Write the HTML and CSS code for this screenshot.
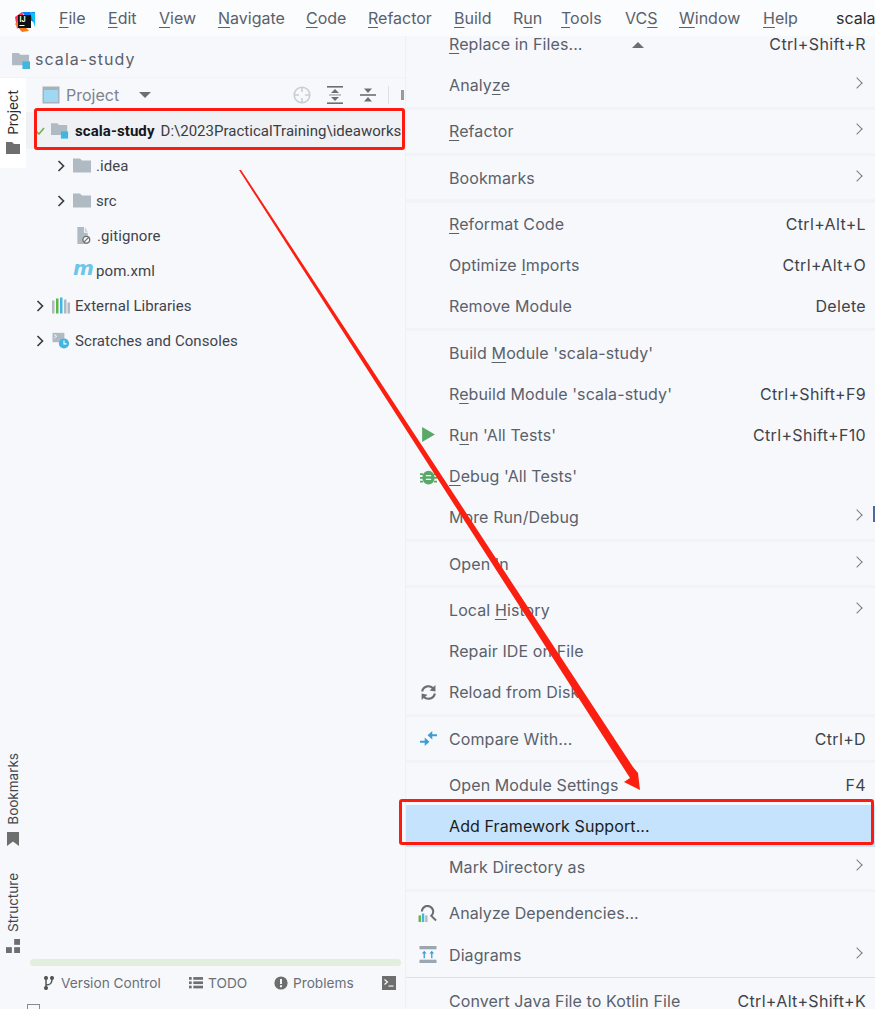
FILE: index.html
```html
<!DOCTYPE html>
<html lang="en">
  <head>
    <meta charset="UTF-8" />
    <title>scala-study</title>
    <link rel="stylesheet" href="styles.css">
  </head>
  <body>
    <div class="app">
      <header class="titlebar">
        <svg class="logo" viewBox="0 0 20 20">
          <polygon points="0,5 7,0 10,6 2,17" fill="#fe315d" />
          <polygon points="7,0 20,0 20,11 12,6" fill="#087cfa" />
          <polygon points="0,12 7,20 14,19 4,8" fill="#f97a12" />
          <polygon points="15,0 20,1 20,15" fill="#07c3f2" />
          <rect x="3" y="3" width="13" height="13" fill="#111" />
          <text x="4.500" y="10" class="logo-text">IJ</text>
          <rect x="4.500" y="13" width="5" height="1" fill="#fff" />
        </svg>
        <nav class="mainmenu">
          <span class="m-file"><u>F</u>ile</span>
          <span class="m-edit"><u>E</u>dit</span>
          <span class="m-view"><u>V</u>iew</span>
          <span class="m-navigate"><u>N</u>avigate</span>
          <span class="m-code"><u>C</u>ode</span>
          <span class="m-refactor"><u>R</u>efactor</span>
          <span class="m-build"><u>B</u>uild</span>
          <span class="m-run">R<u>u</u>n</span>
          <span class="m-tools"><u>T</u>ools</span>
          <span class="m-vcs">VC<u>S</u></span>
          <span class="m-window"><u>W</u>indow</span>
          <span class="m-help"><u>H</u>elp</span>
        </nav>
        <span class="window-title">scala-study</span>
      </header>

      <div class="main">
        <div class="side">
          <div class="navbar">
            <svg class="icon-folder-mod" viewBox="0 0 20 18">
              <path d="M0 1h7l2 2h9v11H0z" fill="#b0bac2" />
              <rect x="11" y="10" width="8" height="8" fill="#40b6e0" />
            </svg>
            <span class="nav-name">scala-study</span>
          </div>

          <div class="workspace">
            <div class="strip">
              <div class="strip-tab active">
                <span class="vtext">Project</span>
                <svg class="strip-icon" viewBox="0 0 14 12"><path d="M0 0h6l2 2h6v10H0z" fill="#6e6e6e" /></svg>
              </div>
              <div class="strip-bottom">
                <div class="strip-tab">
                  <span class="vtext">Bookmarks</span>
                  <svg class="strip-icon tall" viewBox="0 0 12 14"><path d="M0 0h12v14L6 9.500 0 14z" fill="#6e6e6e" /></svg>
                </div>
                <div class="strip-tab">
                  <span class="vtext">Structure</span>
                  <svg class="strip-icon tall" viewBox="0 0 12 12">
                    <rect x="7" y="0" width="5" height="5" fill="#6e6e6e" />
                    <rect x="0" y="7" width="5" height="5" fill="#6e6e6e" />
                    <rect x="7" y="7" width="5" height="5" fill="#6e6e6e" />
                  </svg>
                </div>
              </div>
            </div>

            <div class="panel">
              <div class="panel-head">
                <svg class="icon-view" viewBox="0 0 18 18">
                  <rect x="0.500" y="0.500" width="17" height="17" fill="#a9b2ba" />
                  <rect x="2" y="4" width="14" height="12" fill="#9fd8f2" />
                </svg>
                <span class="panel-title">Project</span>
                <span class="caret"></span>
                <div class="panel-tools">
                  <svg class="tool" viewBox="0 0 18 18" fill="none" stroke="#c9cdd2" stroke-width="1.600">
                    <circle cx="9" cy="9" r="7.800" />
                    <path d="M9 1v5M9 12v5M1 9h5M12 9h5" />
                  </svg>
                  <svg class="tool" viewBox="0 0 16 18" fill="#6e6e6e">
                    <rect x="0" y="0" width="16" height="1.600" />
                    <rect x="0" y="16.400" width="16" height="1.600" />
                    <polygon points="8,3 12,7 4,7" />
                    <polygon points="8,15 12,11 4,11" />
                    <rect x="2" y="8.300" width="12" height="1.300" fill="#a8a8a8" />
                  </svg>
                  <svg class="tool" viewBox="0 0 16 18" fill="#6e6e6e">
                    <rect x="0" y="8.200" width="16" height="1.600" />
                    <polygon points="8,7 12,2.500 4,2.500" />
                    <polygon points="8,11 12,15.500 4,15.500" />
                  </svg>
                  <span class="tool-sep"></span>
                  <span class="tool-cut"></span>
                </div>
              </div>

              <ul class="tree">
                <li class="tree-row selected">
                  <svg class="check" viewBox="0 0 10 8" fill="none" stroke="#62b543" stroke-width="1.500"><path d="M1 4l3 3 5-6" /></svg>
                  <svg class="tree-icon" viewBox="0 0 20 18">
                    <path d="M0 1h7l2 2h9v11H0z" fill="#b0bac2" />
                    <rect x="11" y="10" width="8" height="8" fill="#40b6e0" />
                  </svg>
                  <b class="tree-bold">scala-study</b>
                  <span class="tree-path">D:\2023PracticalTraining\ideaworks</span>
                </li>
                <li class="tree-row lvl1">
                  <svg class="chev" viewBox="0 0 8 12" fill="none" stroke="#3c3f41" stroke-width="1.700"><path d="M1.500 1l5 5-5 5" /></svg>
                  <svg class="tree-icon" viewBox="0 0 18 14"><path d="M0 0h7l2 2h9v12H0z" fill="#b0bac2" /></svg>
                  <span>.idea</span>
                </li>
                <li class="tree-row lvl1">
                  <svg class="chev" viewBox="0 0 8 12" fill="none" stroke="#3c3f41" stroke-width="1.700"><path d="M1.500 1l5 5-5 5" /></svg>
                  <svg class="tree-icon" viewBox="0 0 18 14"><path d="M0 0h7l2 2h9v12H0z" fill="#b0bac2" /></svg>
                  <span>src</span>
                </li>
                <li class="tree-row lvl1 leaf">
                  <svg class="tree-icon" viewBox="0 0 18 18">
                    <path d="M3 0h7v6h4v12H3z" fill="#b0bac2" />
                    <path d="M11 0l3 5h-3z" fill="#c9d0d6" />
                    <circle cx="12.500" cy="13.500" r="3.600" fill="#f7f8fb" stroke="#6e6e6e" stroke-width="1.400" />
                    <path d="M10 16l5-5" stroke="#6e6e6e" stroke-width="1.300" />
                  </svg>
                  <span>.gitignore</span>
                </li>
                <li class="tree-row lvl1 leaf">
                  <span class="maven-m">m</span>
                  <span>pom.xml</span>
                </li>
                <li class="tree-row">
                  <svg class="chev" viewBox="0 0 8 12" fill="none" stroke="#3c3f41" stroke-width="1.700"><path d="M1.500 1l5 5-5 5" /></svg>
                  <svg class="tree-icon" viewBox="0 0 18 16">
                    <rect x="0" y="3" width="2.500" height="13" fill="#b0bac2" />
                    <rect x="4" y="1" width="2.500" height="15" fill="#62b543" />
                    <rect x="8" y="0" width="2.500" height="16" fill="#40b6e0" />
                    <rect x="12" y="2" width="2.500" height="14" fill="#b0bac2" />
                    <rect x="15.500" y="5" width="2.500" height="11" fill="#b0bac2" />
                  </svg>
                  <span>External Libraries</span>
                </li>
                <li class="tree-row">
                  <svg class="chev" viewBox="0 0 8 12" fill="none" stroke="#3c3f41" stroke-width="1.700"><path d="M1.500 1l5 5-5 5" /></svg>
                  <svg class="tree-icon" viewBox="0 0 20 20">
                    <rect x="0" y="1" width="14" height="11" fill="#b0bac2" />
                    <path d="M2 3l3 2-3 2" fill="none" stroke="#fff" stroke-width="1" />
                    <circle cx="13.500" cy="13.500" r="6" fill="#40b6e0" />
                    <path d="M13.500 10v4h3" fill="none" stroke="#fff" stroke-width="1.300" />
                  </svg>
                  <span>Scratches and Consoles</span>
                </li>
              </ul>

              <div class="progress"></div>
            </div>
          </div>

          <div class="toolbar">
            <span class="tw tw-vc">
              <svg class="tw-icon" viewBox="0 0 12 14" fill="none" stroke="#555" stroke-width="1.500">
                <path d="M3 2v10M3 9c5 0 6-2 6-6" />
                <circle cx="3" cy="2" r="1.300" fill="#555" />
                <circle cx="3" cy="12" r="1.300" fill="#555" />
                <circle cx="9" cy="2" r="1.300" fill="#555" />
              </svg>
              Version Control
            </span>
            <span class="tw tw-todo">
              <svg class="tw-icon" viewBox="0 0 13 11" fill="#6e6e6e">
                <rect y="0" width="2.500" height="2.500" /><rect x="4" y="0" width="9" height="2.500" />
                <rect y="4" width="2.500" height="2.500" /><rect x="4" y="4" width="9" height="2.500" />
                <rect y="8" width="2.500" height="2.500" /><rect x="4" y="8" width="9" height="2.500" />
              </svg>
              TODO
            </span>
            <span class="tw tw-problems">
              <svg class="tw-icon" viewBox="0 0 14 14">
                <circle cx="7" cy="7" r="6.600" fill="#6e6e6e" />
                <rect x="6" y="3" width="2" height="5" fill="#f7f8fb" />
                <rect x="6" y="9.200" width="2" height="2" fill="#f7f8fb" />
              </svg>
              Problems
            </span>
            <svg class="tw-term" viewBox="0 0 14 14">
              <rect width="14" height="14" fill="#6e6e6e" />
              <path d="M2.500 3.500l3 2.500-3 2.500" fill="none" stroke="#fff" stroke-width="1.100" />
              <rect x="6.500" y="9.500" width="5" height="1.100" fill="#fff" />
            </svg>
          </div>
          <div class="corner"><span class="corner-icon"></span></div>
        </div>

        <div class="popup">
          <ul class="popup-list">
            <li class="item"><span><u>R</u>eplace in Files...</span><kbd>Ctrl+Shift+R</kbd></li>
            <li class="item"><span>Analy<u>z</u>e</span><i class="sub"></i></li>
            <li class="sep"></li>
            <li class="item"><span><u>R</u>efactor</span><i class="sub"></i></li>
            <li class="sep"></li>
            <li class="item"><span>Bookmarks</span><i class="sub"></i></li>
            <li class="sep"></li>
            <li class="item"><span><u>R</u>eformat Code</span><kbd>Ctrl+Alt+L</kbd></li>
            <li class="item"><span>Optimize <u>I</u>mports</span><kbd>Ctrl+Alt+O</kbd></li>
            <li class="item"><span>Remove Module</span><kbd>Delete</kbd></li>
            <li class="sep"></li>
            <li class="item"><span>Build <u>M</u>odule 'scala-study'</span></li>
            <li class="item"><span>R<u>e</u>build Module 'scala-study'</span><kbd>Ctrl+Shift+F9</kbd></li>
            <li class="item">
              <svg class="item-icon" viewBox="0 0 16 16"><polygon points="2,1 14,8 2,15" fill="#59a869" /></svg>
              <span>R<u>u</u>n 'All Tests'</span><kbd>Ctrl+Shift+F10</kbd>
            </li>
            <li class="item">
              <svg class="item-icon" viewBox="0 0 16 16" fill="#59a869">
                <ellipse cx="8" cy="9" rx="5.800" ry="6.500" />
                <path d="M0 5h3v1.600H0zM0 8.500h3v1.600H0zM0 12h3v1.600H0zM13 5h3v1.600h-3zM13 8.500h3v1.600h-3zM13 12h3v1.600h-3z" />
                <path d="M5.500 6.500h5v1.200h-5zM5.500 10h5v1.200h-5z" fill="#f7f8fb" />
              </svg>
              <span><u>D</u>ebug 'All Tests'</span>
            </li>
            <li class="item"><span>More Run/Debug</span><i class="sub"></i></li>
            <li class="sep"></li>
            <li class="item"><span>Open In</span><i class="sub"></i></li>
            <li class="sep"></li>
            <li class="item"><span>Local <u>H</u>istory</span><i class="sub"></i></li>
            <li class="item"><span>Repair IDE on File</span></li>
            <li class="item">
              <svg class="item-icon" viewBox="0 0 16 16" fill="none" stroke="#6e6e6e" stroke-width="2">
                <path d="M2 7a6 6 0 0 1 11-2M14 9a6 6 0 0 1-11 2" />
                <polygon points="14.500,1 14.500,7 9,6" fill="#6e6e6e" stroke="none" />
                <polygon points="1.500,15 1.500,9 7,10" fill="#6e6e6e" stroke="none" />
              </svg>
              <span>Reload from Disk</span>
            </li>
            <li class="sep"></li>
            <li class="item">
              <svg class="item-icon" viewBox="0 0 18 18" fill="#389fd6">
                <polygon points="8,5.500 13,1 13,4.500 18,4.500 18,6.500 13,6.500 13,10" />
                <polygon points="10,12.500 5,8 5,11.500 0,11.500 0,13.500 5,13.500 5,17" />
              </svg>
              <span>Compare With...</span><kbd>Ctrl+D</kbd>
            </li>
            <li class="sep"></li>
            <li class="item"><span>Open Module Settings</span><kbd>F4</kbd></li>
            <li class="item active"><span>Add Framework Support...</span></li>
            <li class="item"><span>Mark Directory as</span><i class="sub"></i></li>
            <li class="sep"></li>
            <li class="item">
              <svg class="item-icon wide" viewBox="0 0 20 18">
                <path d="M3.500 7a6 6 0 1 1 10 4.500l5 5" fill="none" stroke="#6e6e6e" stroke-width="2.200" />
                <rect x="0" y="11" width="2.500" height="7" fill="#62b543" />
                <rect x="3.500" y="9" width="2.500" height="9" fill="#40b6e0" />
                <rect x="7" y="11" width="2.500" height="7" fill="#b0bac2" />
              </svg>
              <span>Analyze Dependencies...</span>
            </li>
            <li class="item">
              <svg class="item-icon wide" viewBox="0 0 18 18">
                <rect width="18" height="3.500" fill="#9aa7b0" />
                <rect y="14.500" width="18" height="3.500" fill="#9aa7b0" />
                <path d="M5 5l2.500 3H5.700v5H4.300V8H2.500zM13 5l2.500 3h-1.800v5h-1.400V8h-1.800z" fill="#389fd6" />
              </svg>
              <span>Diagrams</span><i class="sub"></i>
            </li>
            <li class="sep blue"></li>
            <li class="item"><span>Convert Java File to Kotlin File</span><kbd>Ctrl+Alt+Shift+K</kbd></li>
          </ul>
          <span class="scroll-up"></span>
        </div>
      </div>

      <!-- annotations drawn over the screenshot -->
      <div class="edge-bit"></div>
      <div class="mark mark-tree"></div>
      <div class="mark mark-item"></div>
      <svg class="arrow" viewBox="0 0 875 1009">
        <polygon points="239,170 241,170 633,767 638,773 640,790 624,782 630,778" fill="#fb1f12" />
      </svg>
    </div>
  </body>
</html>
```

FILE: styles.css
```css
* {
  box-sizing: border-box;
}

:root {
  --panel: #f7f8fb;
  --line: #f2f3f6;
  --text: #5a616b;
  --red: #fb1b10;
}

body {
  margin: 0;
  background: var(--panel);
  font-family: "Inter", "Noto Sans", sans-serif;
  color: var(--text);
}

.app {
  position: relative;
  width: 875px;
  height: 1009px;
  overflow: hidden;
  display: flex;
  flex-direction: column;
}

/* title bar */
.titlebar {
  height: 36px;
  flex: none;
  display: flex;
  align-items: center;
  background: #fbfcfe;
  font-size: 16px;
  white-space: nowrap;
}

.logo {
  width: 20px;
  height: 20px;
  margin: 7px 0 0 15px;
  flex: none;
}

.logo-text {
  font-size: 7px;
  font-weight: 700;
  fill: #fff;
}

.mainmenu {
  display: flex;
  margin-left: 24px;
}

.mainmenu u,
.item u {
  text-underline-offset: 3px;
}

.m-file { width: 49px; }
.m-edit { width: 51px; }
.m-view { width: 59px; }
.m-navigate { width: 88px; }
.m-code { width: 62px; }
.m-refactor { width: 86px; }
.m-build { width: 59px; }
.m-run { width: 48px; }
.m-tools { width: 64px; }
.m-vcs { width: 54px; }
.m-window { width: 84px; }
.m-help { width: 73px; }

.window-title {
  color: #2b2d30;
}

.main {
  flex: 1;
  display: flex;
  min-height: 0;
}

/* left side */
.side {
  width: 405px;
  flex: none;
  display: flex;
  flex-direction: column;
}

.navbar {
  height: 42px;
  flex: none;
  display: flex;
  align-items: center;
  padding-left: 12px;
  padding-top: 4px;
  border-bottom: 1px solid var(--line);
}

.icon-folder-mod {
  width: 19px;
  height: 17px;
  margin-top: 3px;
}

.nav-name {
  margin-left: 4px;
  font-size: 16px;
  letter-spacing: 1.050px;
}

.workspace {
  flex: 1;
  display: flex;
  min-height: 0;
}

.strip {
  width: 26px;
  flex: none;
  display: flex;
  flex-direction: column;
  font-size: 13.500px;
  color: #45494f;
}

.strip-tab {
  display: flex;
  flex-direction: column;
  align-items: center;
}

.strip-tab.active {
  height: 90px;
  padding-top: 12px;
  background: #fff;
  color: #2b2d30;
}

.vtext {
  writing-mode: vertical-rl;
  transform: rotate(180deg);
}

.strip-icon {
  width: 14px;
  height: 12px;
  margin-top: 7px;
}

.strip-icon.tall {
  height: 14px;
}

.strip-bottom {
  margin-top: auto;
  padding-bottom: 15px;
  display: flex;
  flex-direction: column;
  gap: 27px;
}

.panel {
  flex: 1;
  min-width: 0;
  display: flex;
  flex-direction: column;
}

.panel-head {
  height: 33px;
  margin-bottom: 2px;
  flex: none;
  display: flex;
  align-items: center;
  padding-left: 16px;
  padding-right: 1px;
}

.icon-view {
  width: 18px;
  height: 18px;
}

.panel-title {
  margin-left: 6px;
  font-size: 16px;
  color: #7d848c;
}

.caret {
  margin-left: 20px;
  border-left: 6px solid transparent;
  border-right: 6px solid transparent;
  border-top: 6px solid #6e6e6e;
}

.panel-tools {
  margin-left: auto;
  display: flex;
  align-items: center;
  overflow: hidden;
}

.tool {
  width: 18px;
  height: 18px;
  margin-left: 15px;
}

.tool-sep {
  width: 1px;
  height: 18px;
  background: #dfe1e5;
  margin-left: 11px;
  margin-right: 12px;
}

.tool-cut {
  width: 3px;
  height: 10px;
  background: #9a9a9a;
}

.tree {
  list-style: none;
  margin: 0;
  padding: 0;
  font-family: "Roboto", sans-serif;
  font-size: 15px;
  letter-spacing: 0.08px;
  color: #3f444b;
}

.tree-row {
  height: 35px;
  display: flex;
  align-items: center;
  padding-left: 10px;
  white-space: nowrap;
}

.tree-row.selected {
  height: 37px;
  margin-top: -1px;
  margin-bottom: -1px;
  background: #f0f1f5;
  overflow: hidden;
}

.tree-row.lvl1 {
  padding-left: 31px;
}

.tree-row.leaf {
  padding-left: 48px;
}

.chev {
  width: 8px;
  height: 12px;
  margin-right: 8px;
  flex: none;
}

.check {
  width: 10px;
  height: 8px;
  margin-right: 6px;
  margin-left: -1px;
  flex: none;
}

.tree-icon {
  width: 18px;
  height: 17px;
  margin-right: 5px;
  flex: none;
}

.selected .tree-icon {
  margin-right: 6px;
}

.tree-bold {
  color: #15171a;
  font-weight: 700;
  font-size: 15px;
  margin-right: 6px;
}

.tree-path {
  font-size: 15px;
  letter-spacing: 0.02px;
  color: #3a3d42;
}

.maven-m {
  width: 18px;
  margin-left: -1px;
  margin-right: 5px;
  color: #6cc5ea;
  font-family: "DejaVu Sans", sans-serif;
  font-weight: 700;
  font-style: italic;
  font-size: 20px;
  line-height: 1;
  margin-top: -6px;
}

.progress {
  height: 7px;
  margin-top: auto;
  margin-left: 4px;
  margin-right: 4px;
  margin-bottom: 2px;
  background: #e3efdd;
  border-radius: 4px;
}

.toolbar {
  height: 30px;
  flex: none;
  display: flex;
  align-items: center;
  padding-left: 42px;
  font-size: 13.700px;
  color: #6a7078;
}

.tw {
  display: flex;
  align-items: center;
  white-space: nowrap;
}

.tw-icon {
  width: 14px;
  height: 14px;
  margin-right: 5px;
  flex: none;
}

.tw-vc { width: 147px; }
.tw-todo { width: 85px; }
.tw-problems { width: 108px; }

.tw-term {
  width: 14px;
  height: 14px;
}

.corner {
  height: 11px;
  flex: none;
  padding: 6px 0 0 27px;
}

.corner-icon {
  display: block;
  width: 13px;
  height: 10px;
  border: 1px solid #8a8a8a;
}

/* context menu */
.popup {
  position: relative;
  flex: 1;
  min-width: 0;
  overflow: hidden;
  border-left: 1px solid #eef0f3;
  background: var(--panel);
}

.popup-list {
  list-style: none;
  margin: -12.600px 0 0;
  padding: 0;
  font-size: 16px;
  letter-spacing: 0.1px;
}

.item {
  height: 41.150px;
  display: flex;
  align-items: center;
  padding-left: 43px;
  padding-right: 9px;
  position: relative;
  white-space: nowrap;
}

.item kbd {
  margin-left: auto;
  font-family: inherit;
  letter-spacing: 0.35px;
  color: #3e4349;
}

.item.active {
  background: #c5e3fc;
  color: #1a1d22;
}

.sub {
  margin-left: auto;
  margin-right: 5px;
  margin-top: -4px;
  width: 8px;
  height: 8px;
  border-top: 1.500px solid #7d7d7d;
  border-right: 1.500px solid #7d7d7d;
  transform: rotate(45deg);
}

.sep {
  height: 5.200px;
  background: var(--line);
  background-clip: content-box;
  padding-top: 1px;
  padding-bottom: 1px;
}

.sep.blue {
  background: #cfe4f6;
  background-clip: content-box;
  padding-top: 2px;
  padding-bottom: 2px;
}

.item-icon {
  position: absolute;
  left: 14px;
  width: 17px;
  height: 17px;
}

.item-icon.wide {
  left: 12px;
  width: 20px;
}

.scroll-up {
  position: absolute;
  left: 226px;
  top: 6px;
  border-left: 6px solid transparent;
  border-right: 6px solid transparent;
  border-bottom: 6px solid #6e6e6e;
}

/* sliver of the window behind the menu */
.edge-bit {
  position: absolute;
  right: 0;
  top: 506px;
  width: 2px;
  height: 16px;
  background: #4a6a9a;
}

/* red annotations */
.mark {
  position: absolute;
  border: 3px solid var(--red);
  border-radius: 3px;
}

.mark-tree {
  left: 34px;
  top: 108px;
  width: 371px;
  height: 42px;
}

.mark-item {
  left: 399px;
  top: 799px;
  width: 475px;
  height: 46px;
}

.arrow {
  position: absolute;
  left: 0;
  top: 0;
  width: 875px;
  height: 1009px;
  pointer-events: none;
}
```
